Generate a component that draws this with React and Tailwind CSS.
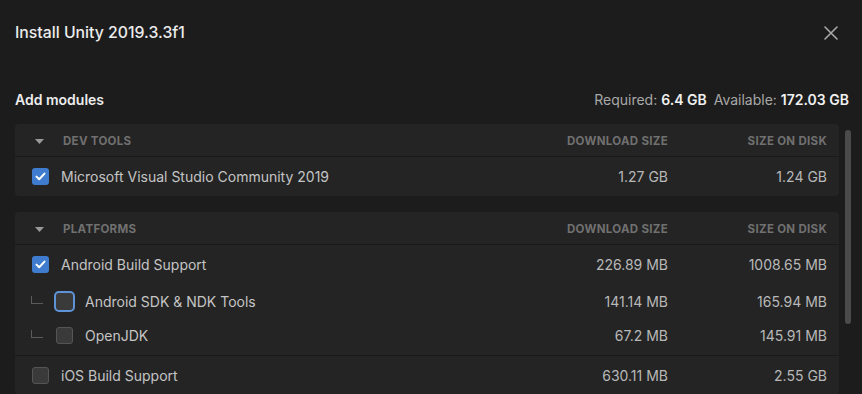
import React from 'react';

const sections = [
  {
    name: 'DEV TOOLS',
    groups: [
      { rows: [{ label: 'Microsoft Visual Studio Community 2019', dl: '1.27 GB', disk: '1.24 GB', checked: true }] },
    ],
  },
  {
    name: 'PLATFORMS',
    groups: [
      {
        rows: [
          { label: 'Android Build Support', dl: '226.89 MB', disk: '1008.65 MB', checked: true },
          { label: 'Android SDK & NDK Tools', dl: '141.14 MB', disk: '165.94 MB', child: true, focused: true },
          { label: 'OpenJDK', dl: '67.2 MB', disk: '145.91 MB', child: true, last: true },
        ],
      },
      { rows: [{ label: 'iOS Build Support', dl: '630.11 MB', disk: '2.55 GB' }] },
    ],
  },
];

function Checkbox({ checked, focused }) {
  if (checked) {
    return (
      <div className="w-[17px] h-[17px] rounded-[3px] bg-[#3f7bcf] flex items-center justify-center shrink-0">
        <svg width="11" height="9" viewBox="0 0 11 9" fill="none">
          <path d="M1.5 4.6 L4.2 7.2 L9.5 1.6" stroke="white" strokeWidth="2" strokeLinecap="round" strokeLinejoin="round" />
        </svg>
      </div>
    );
  }
  if (focused) {
    return <div className="w-[21px] h-[21px] -ml-[2px] -mr-[2px] rounded-[5px] border-2 border-[#5f93d8] bg-[#3a3a3a] shrink-0" />;
  }
  return <div className="w-[17px] h-[17px] rounded-[3px] border border-[#555555] bg-[#3a3a3a] shrink-0" />;
}

function Row({ row }) {
  return (
    <div className={`flex items-center pr-[12px] ${row.child ? (row.last ? 'h-[37px] pb-[3px]' : 'h-[34px]') : 'h-[39px]'}`}>
      {row.child && (
        <div className="w-[12px] h-[8px] ml-[16px] border-l border-b border-[#5a5a5a] -mt-[2px]" />
      )}
      <div className={row.child ? 'ml-[13px]' : 'ml-[17px]'}>
        <Checkbox checked={row.checked} focused={row.focused} />
      </div>
      <span className="ml-[12px] flex-1 text-[14px] text-[#c4c4c4]">{row.label}</span>
      <span className="text-[14px] text-[#b8b8b8] text-right">{row.dl}</span>
      <span className="w-[159px] text-[14px] text-[#b8b8b8] text-right">{row.disk}</span>
    </div>
  );
}

export default function App() {
  return (
    <div className="w-[862px] h-[394px] overflow-hidden bg-[#1c1c1c] text-white" style={{ fontFamily: 'Inter, "Noto Sans", sans-serif' }}>
      <div className="flex items-center justify-between h-[66px] pl-[15px] pr-[24px]">
        <h1 className="text-[15.8px] font-medium text-[#ececec]">Install Unity 2019.3.3f1</h1>
        <svg width="14" height="14" viewBox="0 0 14 14" className="-mt-[1px]">
          <path d="M1 1 L13 13 M13 1 L1 13" stroke="#a8a8a8" strokeWidth="1.6" strokeLinecap="round" />
        </svg>
      </div>
      <div className="flex items-end justify-between h-[43px] pb-[1px] pl-[15px] pr-[13px]">
        <span className="text-[14px] font-semibold text-[#ececec] leading-[17px]">Add modules</span>
        <span className="text-[14px] text-[#a8a8a8] leading-[17px]">
          Required: <b className="text-[#f0f0f0] font-semibold">6.4 GB</b>
          <span className="ml-[7px]">Available: </span>
          <b className="text-[#f0f0f0] font-semibold">172.03 GB</b>
        </span>
      </div>
      <div className="flex mt-[15px]">
        <div className="ml-[15px] w-[824px] flex flex-col gap-[16px]">
          {sections.map(sec => (
            <div key={sec.name} className="bg-[#242424] rounded-[4px]">
              <div className="flex items-center h-[33px] pt-[3px] pr-[12px] border-b border-[#1a1a1a]">
                <svg width="9" height="5" viewBox="0 0 9 5" className="ml-[20px]">
                  <path d="M0 0 L9 0 L4.5 5 Z" fill="#9a9a9a" />
                </svg>
                <span className="ml-[19px] flex-1 text-[11.5px] font-bold text-[#707070] tracking-[0.3px]">{sec.name}</span>
                <span className="text-[11.5px] font-bold text-[#707070] tracking-[0.3px]">DOWNLOAD SIZE</span>
                <span className="w-[159px] text-right text-[11.5px] font-bold text-[#707070] tracking-[0.3px]">SIZE ON DISK</span>
              </div>
              {sec.groups.map((g, gi) => (
                <div key={gi} className={gi > 0 ? 'border-t border-[#1a1a1a]' : ''}>
                  {g.rows.map(r => <Row key={r.label} row={r} />)}
                </div>
              ))}
            </div>
          ))}
        </div>
        <div className="ml-[6px] mt-[6px] w-[6px] h-[194px] rounded-full bg-[#4a4a4a]" />
      </div>
    </div>
  );
}
